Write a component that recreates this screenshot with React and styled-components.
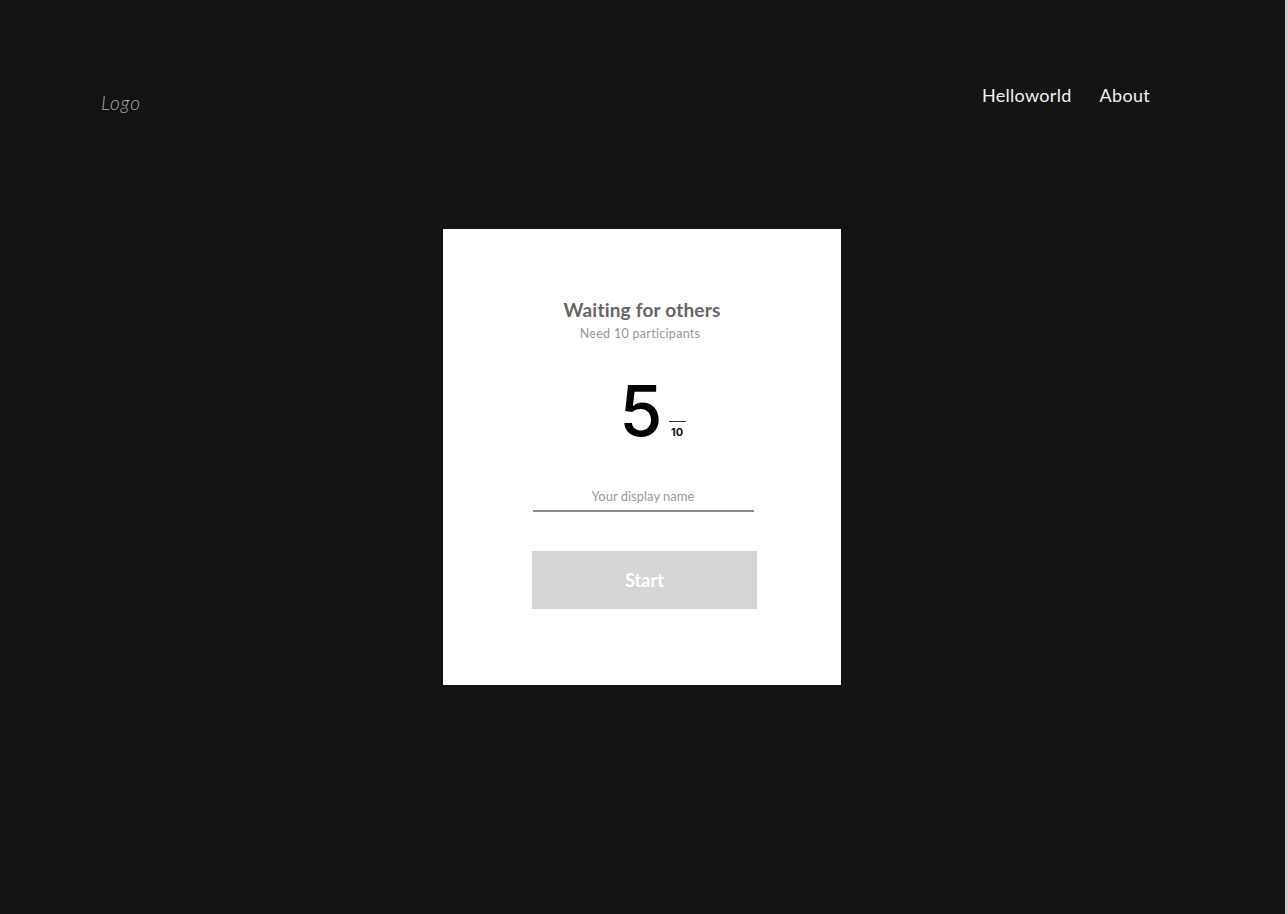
import styled, { createGlobalStyle } from "styled-components";

const GlobalStyle = createGlobalStyle`
  html, body {
    margin: 0;
    padding: 0;
    background: #141414;
  }
  body {
    font-family: Lato, "Noto Sans", sans-serif;
  }
`;

const Page = styled.div`
  width: 1285px;
  height: 914px;
  background: #141414;
  border-right: 3px solid #cfcfcf;
  display: flex;
  flex-direction: column;
  overflow: hidden;
`;

const Header = styled.header`
  display: flex;
  justify-content: space-between;
  align-items: flex-start;
  padding: 84px 135px 0 101px;
  height: 147px;
  box-sizing: border-box;
`;

const Logo = styled.div`
  font-size: 19px;
  font-weight: 300;
  font-style: italic;
  color: #a8a8a8;
  margin-top: 7px;
  letter-spacing: 1px;
`;

const Nav = styled.nav`
  display: flex;
  gap: 28px;
  > a {
    color: #f2f2f2;
    font-size: 18px;
    text-decoration: none;
    letter-spacing: 0.3px;
  }
`;

const Main = styled.main`
  display: flex;
  justify-content: center;
  padding-top: 82px;
  padding-right: 1px;
`;

const Card = styled.section`
  width: 398px;
  height: 456px;
  background: #fff;
  box-sizing: border-box;
  padding-top: 70px;
  display: flex;
  flex-direction: column;
  align-items: center;
`;

const Title = styled.h2`
  margin: 0;
  font-size: 19px;
  font-weight: 700;
  color: #666;
  line-height: 22px;
  letter-spacing: 0.2px;
`;

const Sub = styled.div`
  font-size: 12.5px;
  color: #999;
  margin-top: 5px;
  margin-left: -4px;
  letter-spacing: 0.3px;
`;

const Counter = styled.div`
  display: flex;
  align-items: flex-end;
  margin-top: 35px;
  margin-left: 21px;
`;

const Big = styled.div`
  font-family: Inter, sans-serif;
  font-size: 70px;
  font-weight: 500;
  color: #000;
  line-height: 70px;
`;

const Fraction = styled.div`
  display: flex;
  flex-direction: column;
  align-items: center;
  margin-left: 6px;
  margin-bottom: 8px;
  &::before {
    content: "";
    width: 17px;
    height: 1px;
    background: #333;
    margin-bottom: 5px;
  }
  > span {
    font-family: Inter, sans-serif;
    font-size: 11px;
    font-weight: 700;
    color: #111;
    line-height: 11px;
  }
`;

const Field = styled.input`
  margin-top: 42px;
  width: 221px;
  box-sizing: border-box;
  border: none;
  border-bottom: 2px solid #8c8c8c;
  outline: none;
  background: transparent;
  text-align: center;
  font-family: inherit;
  font-size: 13px;
  padding: 0 0 6px;
  margin-left: 2px;
  &::placeholder {
    color: #9a9a9a;
  }
`;

const StartButton = styled.button`
  margin-top: 39px;
  margin-left: 5px;
  width: 225px;
  height: 58px;
  border: none;
  background: #d5d5d5;
  color: #fff;
  font-family: inherit;
  font-size: 18px;
  font-weight: 700;
`;

export default function App() {
  return (
    <>
      <GlobalStyle />
      <Page>
        <Header>
          <Logo>Logo</Logo>
          <Nav>
            <a href="#">Helloworld</a>
            <a href="#">About</a>
          </Nav>
        </Header>
        <Main>
          <Card>
            <Title>Waiting for others</Title>
            <Sub>Need 10 participants</Sub>
            <Counter>
              <Big>5</Big>
              <Fraction>
                <span>10</span>
              </Fraction>
            </Counter>
            <Field placeholder="Your display name" />
            <StartButton>Start</StartButton>
          </Card>
        </Main>
      </Page>
    </>
  );
}
